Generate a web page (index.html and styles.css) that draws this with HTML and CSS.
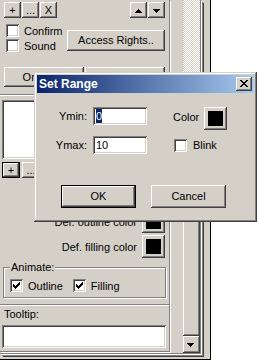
FILE: index.html
```html
<!DOCTYPE html>
<html lang="en">
  <head>
    <meta charset="UTF-8" />
    <meta name="viewport" content="width=device-width, initial-scale=1.0" />
    <title>Set Range</title>
    <link rel="stylesheet" href="styles.css">
  </head>
  <body>
    <div class="window">
      <div class="frame">
        <div class="content">
          <div class="toolbar">
            <div class="tools">
              <button class="btn small">+</button>
              <button class="btn small">...</button>
              <button class="btn small">X</button>
            </div>
            <div class="tools">
              <button class="btn small">
                <svg width="17" height="16" viewBox="0 0 17 16"><path d="M8 7h1v1h1v1h1v1h1v1h-7v-1h1v-1h1v-1h1z"/></svg>
              </button>
              <button class="btn small">
                <svg width="17" height="16" viewBox="0 0 17 16"><path d="M5 7h7v1h-1v1h-1v1h-1v1h-1v-1h-1v-1h-1v-1h-1z"/></svg>
              </button>
            </div>
          </div>

          <div class="flags">
            <div class="checks">
              <div class="check"><span class="box"></span>Confirm</div>
              <div class="check"><span class="box"></span>Sound</div>
            </div>
            <button class="btn access">Access Rights..</button>
          </div>

          <div class="pair">
            <button class="btn wide">Ordering</button>
            <button class="btn wide">Properties</button>
          </div>

          <div class="sep"></div>
          <div class="field list"></div>

          <div class="list-tools">
            <button class="btn tiny default">+</button>
            <button class="btn tiny">...</button>
          </div>

          <div class="color-row first">Def. outline color <button class="btn swatch"><span></span></button></div>
          <div class="color-row">Def. filling color <button class="btn swatch"><span></span></button></div>

          <fieldset class="group">
            <legend>Animate:</legend>
            <div class="anim">
              <div class="check">
                <span class="box"><svg width="13" height="13" viewBox="0 0 13 13"><path d="M9 3h1v3h-1v1h-1v1h-1v1h-1v1h-1v-1h-1v-1h-1v-3h1v1h1v1h1v-1h1v-1h1v-1h1v-1z"/></svg></span>Outline
              </div>
              <div class="check">
                <span class="box"><svg width="13" height="13" viewBox="0 0 13 13"><path d="M9 3h1v3h-1v1h-1v1h-1v1h-1v1h-1v-1h-1v-1h-1v-3h1v1h1v1h1v-1h1v-1h1v-1h1v-1z"/></svg></span>Filling
              </div>
            </div>
          </fieldset>

          <div class="sep low"></div>
          <div class="tip-label">Tooltip:</div>
          <div class="field tooltip"></div>
        </div>

        <div class="scrollbar">
          <div class="track"></div>
          <div class="btn thumb"></div>
          <button class="btn scroll-down">
            <svg width="17" height="17" viewBox="0 0 17 17"><path d="M4 7h7v1h-1v1h-1v1h-1v1h-1v-1h-1v-1h-1v-1h-1z"/></svg>
          </button>
        </div>
      </div>
    </div>

    <!-- modal dialog over the panel -->
    <div class="dialog">
      <div class="title">
        <span>Set Range</span>
        <button class="btn close">
          <svg width="16" height="14" viewBox="0 0 16 14"><path d="M4 3h2v1h1v1h2v-1h1v-1h2v1h-1v1h-1v1h-1v1h1v1h1v1h1v1h-2v-1h-1v-1h-2v1h-1v1h-2v-1h1v-1h1v-1h1v-1h-1v-1h-1v-1h-1z"/></svg>
        </button>
      </div>
      <div class="dlg-body">
        <div class="dlg-row top">
          <span class="lbl">Ymin:</span>
          <div class="field edit"><span class="sel">0</span></div>
          <span class="side-lbl">Color</span>
          <button class="btn swatch"><span></span></button>
        </div>
        <div class="dlg-row">
          <span class="lbl">Ymax:</span>
          <div class="field edit">10</div>
          <div class="check blink"><span class="box"></span>Blink</div>
        </div>
        <div class="dlg-buttons">
          <button class="btn push default">OK</button>
          <button class="btn push">Cancel</button>
        </div>
      </div>
    </div>
  </body>
</html>
```

FILE: styles.css
```css
body {
  margin: 0;
  background: #fff;
  font-family: "Liberation Sans", Arial, sans-serif;
  font-size: 11px;
  color: #000;
  overflow: hidden;
}

button {
  font: inherit;
  color: inherit;
  border: 0;
  padding: 0;
  margin: 0;
}

svg {
  display: block;
  shape-rendering: crispEdges;
}

.btn {
  display: flex;
  align-items: center;
  justify-content: center;
  line-height: 13px;
  background: #d4d0c8;
  box-shadow: inset -1px -1px #404040, inset 1px 1px #fff, inset -2px -2px #808080, inset 2px 2px #d4d0c8;
}

.btn.default {
  box-shadow: inset 0 0 0 1px #000, inset -2px -2px #404040, inset 2px 2px #fff, inset -3px -3px #808080;
}

.field {
  background: #fff;
  box-shadow: inset 1px 1px #808080, inset -1px -1px #fff, inset 2px 2px #404040, inset -2px -2px #d4d0c8;
}

/* outer panel with its scrollbar */
.window {
  display: flex;
  width: 211px;
  height: 360px;
  box-sizing: border-box;
  padding: 0 9px 5px 0;
  border-right: 1px solid #000;
  border-bottom: 1px solid #000;
  background: #d4d0c8;
}

.frame {
  display: flex;
  width: 201px;
  height: 354px;
  box-sizing: border-box;
  border-right: 1px solid #808080;
  border-bottom: 1px solid #808080;
  box-shadow: 1px 1px #fff, 2px 2px #808080, 3px 3px #404040;
}

.content {
  display: flex;
  flex-direction: column;
  width: 170px;
  height: 352px;
  box-sizing: border-box;
  border-right: 1px solid #808080;
  border-bottom: 1px solid #808080;
  box-shadow: 1px 1px #fff;
}

.scrollbar {
  display: flex;
  flex-direction: column;
  width: 17px;
  margin-left: 13px;
}

.track {
  height: 150px;
  background: repeating-conic-gradient(#fff 0 25%, #d4d0c8 0 50%) 0 0 / 2px 2px;
}

.thumb {
  flex: 1;
}

.scroll-down {
  height: 17px;
}

.toolbar {
  display: flex;
  justify-content: space-between;
  margin-top: 2px;
  padding: 0 4px;
}

.tools {
  display: flex;
  gap: 1px;
}

.small {
  width: 17px;
  height: 16px;
}

.flags {
  display: flex;
  margin-top: 6px;
  padding: 0 4px 0 6px;
}

.checks {
  display: flex;
  flex-direction: column;
  gap: 2px;
}

.check {
  display: flex;
  align-items: center;
  gap: 5px;
  height: 13px;
  white-space: nowrap;
}

.box {
  width: 13px;
  height: 13px;
  flex: none;
  background: #fff;
  box-shadow: inset 1px 1px #808080, inset -1px -1px #fff, inset 2px 2px #404040, inset -2px -2px #d4d0c8;
}

.access {
  width: 98px;
  height: 21px;
  margin: 6px 0 0 auto;
}

.pair {
  display: flex;
  gap: 1px;
  margin-top: 15px;
  padding: 0 4px;
}

.wide {
  width: 80px;
  height: 20px;
}

.sep {
  height: 1px;
  margin-top: 7px;
  background: #808080;
  border-bottom: 1px solid #fff;
}

.sep.low {
  margin-top: 6px;
}

.list {
  height: 59px;
  margin: 4px 2px 0 2px;
}

.list-tools {
  display: flex;
  gap: 2px;
  margin-top: 3px;
  padding-left: 2px;
}

.tiny {
  width: 18px;
  height: 16px;
}

.color-row {
  display: flex;
  align-items: center;
  justify-content: flex-end;
  gap: 5px;
  height: 23px;
  margin-top: 2px;
  padding-right: 4px;
}

.color-row.first {
  margin-top: 32px;
}

.swatch {
  width: 23px;
  height: 23px;
  padding: 4px;
  box-sizing: border-box;
}

.swatch span {
  display: block;
  width: 100%;
  height: 100%;
  background: #000;
}

.group {
  margin: 3px 3px 0 3px;
  padding: 5px 6px 5px 6px;
  border: 1px solid #808080;
  box-shadow: inset 1px 1px #fff, 1px 1px #fff;
}

.group legend {
  padding: 0 1px;
  line-height: 13px;
  background: #d4d0c8;
}

.anim {
  display: flex;
  gap: 10px;
  padding-left: 0;
}

.tip-label {
  margin-top: 2px;
  padding-left: 4px;
  line-height: 13px;
}

.tooltip {
  height: 23px;
  margin: 4px 3px 0 2px;
}

/* Set Range dialog */
.dialog {
  position: absolute;
  left: 34px;
  top: 72px;
  width: 223px;
  height: 150px;
  box-sizing: border-box;
  padding: 3px;
  background: #d4d0c8;
  box-shadow: inset -1px -1px #404040, inset 1px 1px #d4d0c8, inset -2px -2px #808080, inset 2px 2px #fff;
}

.title {
  display: flex;
  align-items: center;
  justify-content: space-between;
  height: 18px;
  padding-left: 2px;
  color: #fff;
  font-weight: bold;
  font-size: 12px;
  background: linear-gradient(to right, #0a246a, #a6caf0);
}

.close {
  width: 16px;
  height: 14px;
  margin-right: 2px;
}

.dlg-body {
  padding-top: 14px;
}

.dlg-row {
  display: flex;
  align-items: center;
  height: 18px;
}

.dlg-row.top {
  align-items: flex-start;
  height: 23px;
  margin-bottom: 6px;
}

.lbl {
  width: 50px;
  text-align: right;
  line-height: 18px;
}

.edit {
  display: flex;
  align-items: center;
  width: 54px;
  height: 18px;
  margin-left: 6px;
  padding-left: 3px;
  box-sizing: border-box;
}

.sel {
  line-height: 14px;
  color: #fff;
  background: #0a246a;
}

.side-lbl {
  width: 25px;
  margin-left: 26px;
  margin-right: 6px;
  line-height: 21px;
  white-space: nowrap;
}

.blink {
  margin-left: 27px;
  gap: 6px;
}

.dlg-buttons {
  display: flex;
  gap: 15px;
  margin-top: 31px;
  padding-left: 24px;
}

.push {
  width: 75px;
  height: 23px;
}
```
